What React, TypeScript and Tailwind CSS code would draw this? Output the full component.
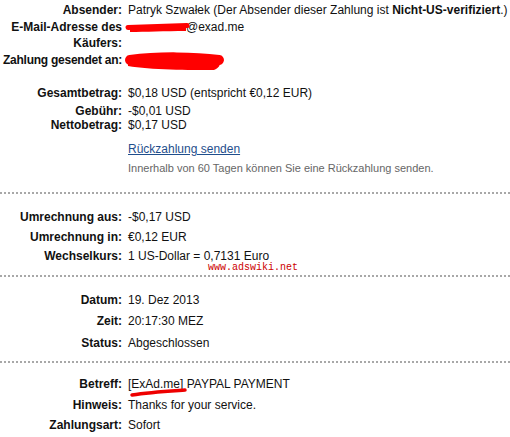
import React from "react";

function Row({ label, children, mt, h = 16 }: { label: React.ReactNode; children?: React.ReactNode; mt: number; h?: number }) {
  return (
    <div className="flex" style={{ marginTop: mt }}>
      <div className="w-[122px] shrink-0 flex justify-end text-right font-bold text-[12px] leading-[16px] text-[#111] whitespace-nowrap" style={{ minHeight: h }}>
        <span>{label}</span>
      </div>
      <div className="ml-[6px] text-[12px] leading-[16px] text-[#111]">{children}</div>
    </div>
  );
}

function Dots({ mt }: { mt: number }) {
  return <div className="w-full border-t-2 border-dotted border-[#a8a8a8]" style={{ marginTop: mt }} />;
}

export default function App() {
  return (
    <div className="relative w-[510px] h-[437px] bg-white overflow-hidden" style={{ fontFamily: '"Liberation Sans", Arial, sans-serif' }}>
      <div className="flex flex-col">
        <Row label="Absender:" mt={2}>
          <span className="whitespace-nowrap">Patryk Szwałek (Der Absender dieser Zahlung ist <b>Nicht-US-verifiziert</b>.)</span>
        </Row>
        <Row label={<>E-Mail-Adresse des<br />Käufers:</>} mt={1}>
          <span className="pl-[58px]">@exad.me</span>
        </Row>
        <Row label={<span className="tracking-[-0.25px]">Zahlung gesendet an:</span>} mt={1}>&nbsp;</Row>
        <Row label="Gesamtbetrag:" mt={17}>$0,18 USD (entspricht €0,12 EUR)</Row>
        <Row label="Gebühr:" mt={2}>-$0,01 USD</Row>
        <Row label="Nettobetrag:" mt={-2}>$0,17 USD</Row>
        <div className="ml-[128px] mt-[8px] text-[12px] leading-[16px] text-[#1f4e8c] underline">Rückzahlung senden</div>
        <div className="ml-[128px] mt-[4px] text-[11px] leading-[14px] text-[#666]">Innerhalb von 60 Tagen können Sie eine Rückzahlung senden.</div>
        <Dots mt={17} />
        <Row label="Umrechnung aus:" mt={15}>-$0,17 USD</Row>
        <Row label="Umrechnung in:" mt={4}>€0,12 EUR</Row>
        <Row label="Wechselkurs:" mt={3}>1 US-Dollar = 0,7131 Euro</Row>
        <Dots mt={11} />
        <Row label="Datum:" mt={15}>19. Dez 2013</Row>
        <Row label="Zeit:" mt={5}>20:17:30 MEZ</Row>
        <Row label="Status:" mt={6}>Abgeschlossen</Row>
        <Dots mt={10} />
        <Row label="Betreff:" mt={13}>[ExAd.me] PAYPAL PAYMENT</Row>
        <Row label="Hinweis:" mt={5}>Thanks for your service.</Row>
        <Row label="Zahlungsart:" mt={4}>Sofort</Row>
      </div>

      <div className="absolute left-[208px] top-[262px] text-[10px] leading-[11px] text-[#cc0000]" style={{ fontFamily: '"Liberation Mono", monospace' }}>www.adswiki.net</div>

      <svg className="absolute left-0 top-0 pointer-events-none" width="510" height="437">
        <path d="M130 29 C 145 27, 165 26, 186 25 L 186 31 C 165 31, 145 32, 130 32 Z" fill="#ff0000" />
        <path d="M128 27.5 L187 25.5" stroke="#ff0000" strokeWidth="5" strokeLinecap="round" />
        <path d="M128 59 C 150 55, 190 56, 218 58 C 222 62, 220 68, 214 70 C 190 70, 150 70, 128 66 Z" fill="#ff0000" />
        <path d="M130 60 C 160 56, 195 57, 219 60" stroke="#ff0000" strokeWidth="10" strokeLinecap="round" fill="none" />
        <path d="M132 395 C 150 392, 170 391, 185 390" stroke="#ee0000" strokeWidth="3.5" strokeLinecap="round" fill="none" />
      </svg>
    </div>
  );
}
